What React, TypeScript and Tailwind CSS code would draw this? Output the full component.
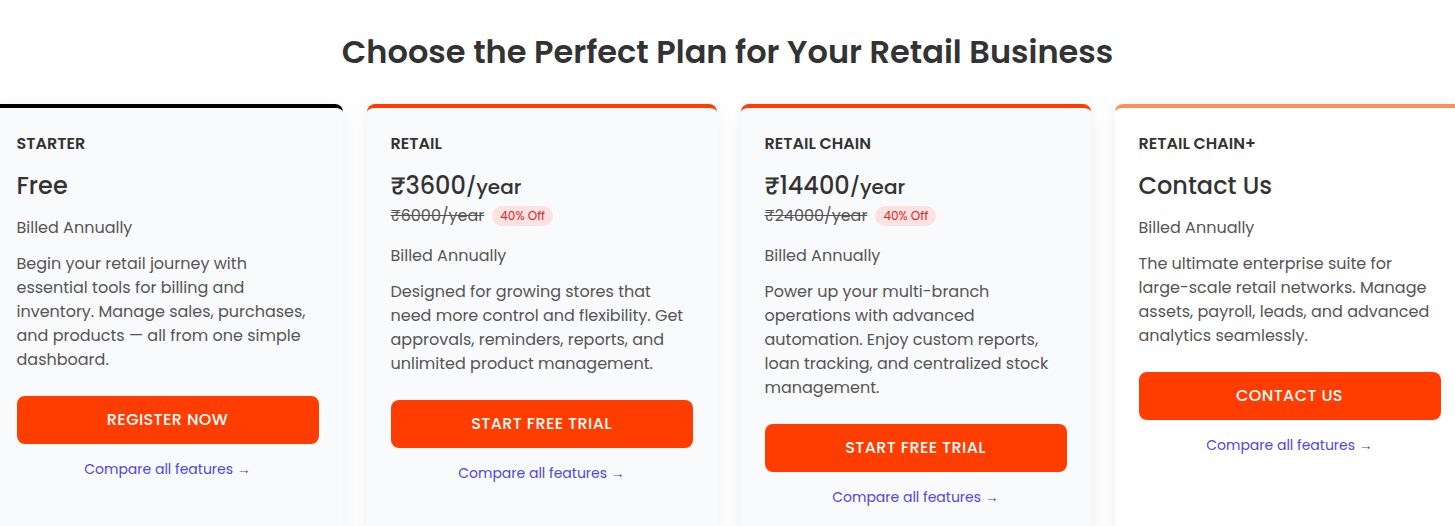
const plans = [
  {
    name: "STARTER",
    price: "Free",
    unit: "",
    oldPrice: "",
    desc: "Begin your retail journey with essential tools for billing and inventory. Manage sales, purchases, and products — all from one simple dashboard.",
    cta: "REGISTER NOW",
    topBorder: "border-black",
    bg: "bg-[#f9fafb]",
  },
  {
    name: "RETAIL",
    price: "₹3600",
    unit: "/year",
    oldPrice: "₹6000/year",
    desc: "Designed for growing stores that need more control and flexibility. Get approvals, reminders, reports, and unlimited product management.",
    cta: "START FREE TRIAL",
    topBorder: "border-[#ff3d00]",
    bg: "bg-[#f9fafb]",
  },
  {
    name: "RETAIL CHAIN",
    price: "₹14400",
    unit: "/year",
    oldPrice: "₹24000/year",
    desc: "Power up your multi-branch operations with advanced automation. Enjoy custom reports, loan tracking, and centralized stock management.",
    cta: "START FREE TRIAL",
    topBorder: "border-[#ff3d00]",
    bg: "bg-[#f9fafb]",
  },
  {
    name: "RETAIL CHAIN+",
    price: "Contact Us",
    unit: "",
    oldPrice: "",
    desc: "The ultimate enterprise suite for large-scale retail networks. Manage assets, payroll, leads, and advanced analytics seamlessly.",
    cta: "CONTACT US",
    topBorder: "border-[#ff8f5a]",
    bg: "bg-white",
  },
]

export default function App() {
  return (
    <div className="min-h-screen overflow-hidden bg-white font-['Poppins','Open_Sans',sans-serif] text-[#333]">
      {/* Heading */}
      <h1 className="pt-8 text-center text-[32px] font-semibold leading-10 text-[#333]">
        Choose the Perfect Plan for Your Retail Business
      </h1>

      {/* Plans */}
      <div className="mt-8 flex justify-center gap-6 pl-[2px]">
        {plans.map((p) => (
          <div
            key={p.name}
            className={`flex w-[350px] shrink-0 flex-col rounded-t-lg border-t-4 px-6 pt-[26px] pb-10 shadow-[0_4px_20px_rgba(0,0,0,0.07)] ${p.topBorder} ${p.bg}`}
          >
            <div className="text-base font-semibold leading-5 text-[#333]">{p.name}</div>

            <div className="mt-4 leading-8">
              <span className="text-[24px] font-medium text-[#333]">{p.price}</span>
              {p.unit && <span className="text-[20px] font-medium text-[#333]">{p.unit}</span>}
            </div>

            {p.oldPrice && (
              <div className="-mt-px flex items-center gap-2 leading-6">
                <span className="text-base text-[#555] line-through">{p.oldPrice}</span>
                <span className="rounded-full bg-[#fee2e2] px-2 py-0.5 text-xs leading-4 text-[#dc2626]">40% Off</span>
              </div>
            )}

            <div className={`${p.oldPrice ? "mt-4" : "mt-[11px]"} text-base leading-6 text-[#555]`}>Billed Annually</div>

            <p className="mt-3 text-base leading-6 text-[#555]">{p.desc}</p>

            <button className="mt-6 h-12 w-full rounded-lg bg-[#ff3d00] text-base font-medium tracking-wide text-white">
              {p.cta}
            </button>

            <a href="#" className="mt-[15px] text-center text-sm leading-5 text-[#4f46e5]">
              Compare all features →
            </a>
          </div>
        ))}
      </div>
    </div>
  )
}
